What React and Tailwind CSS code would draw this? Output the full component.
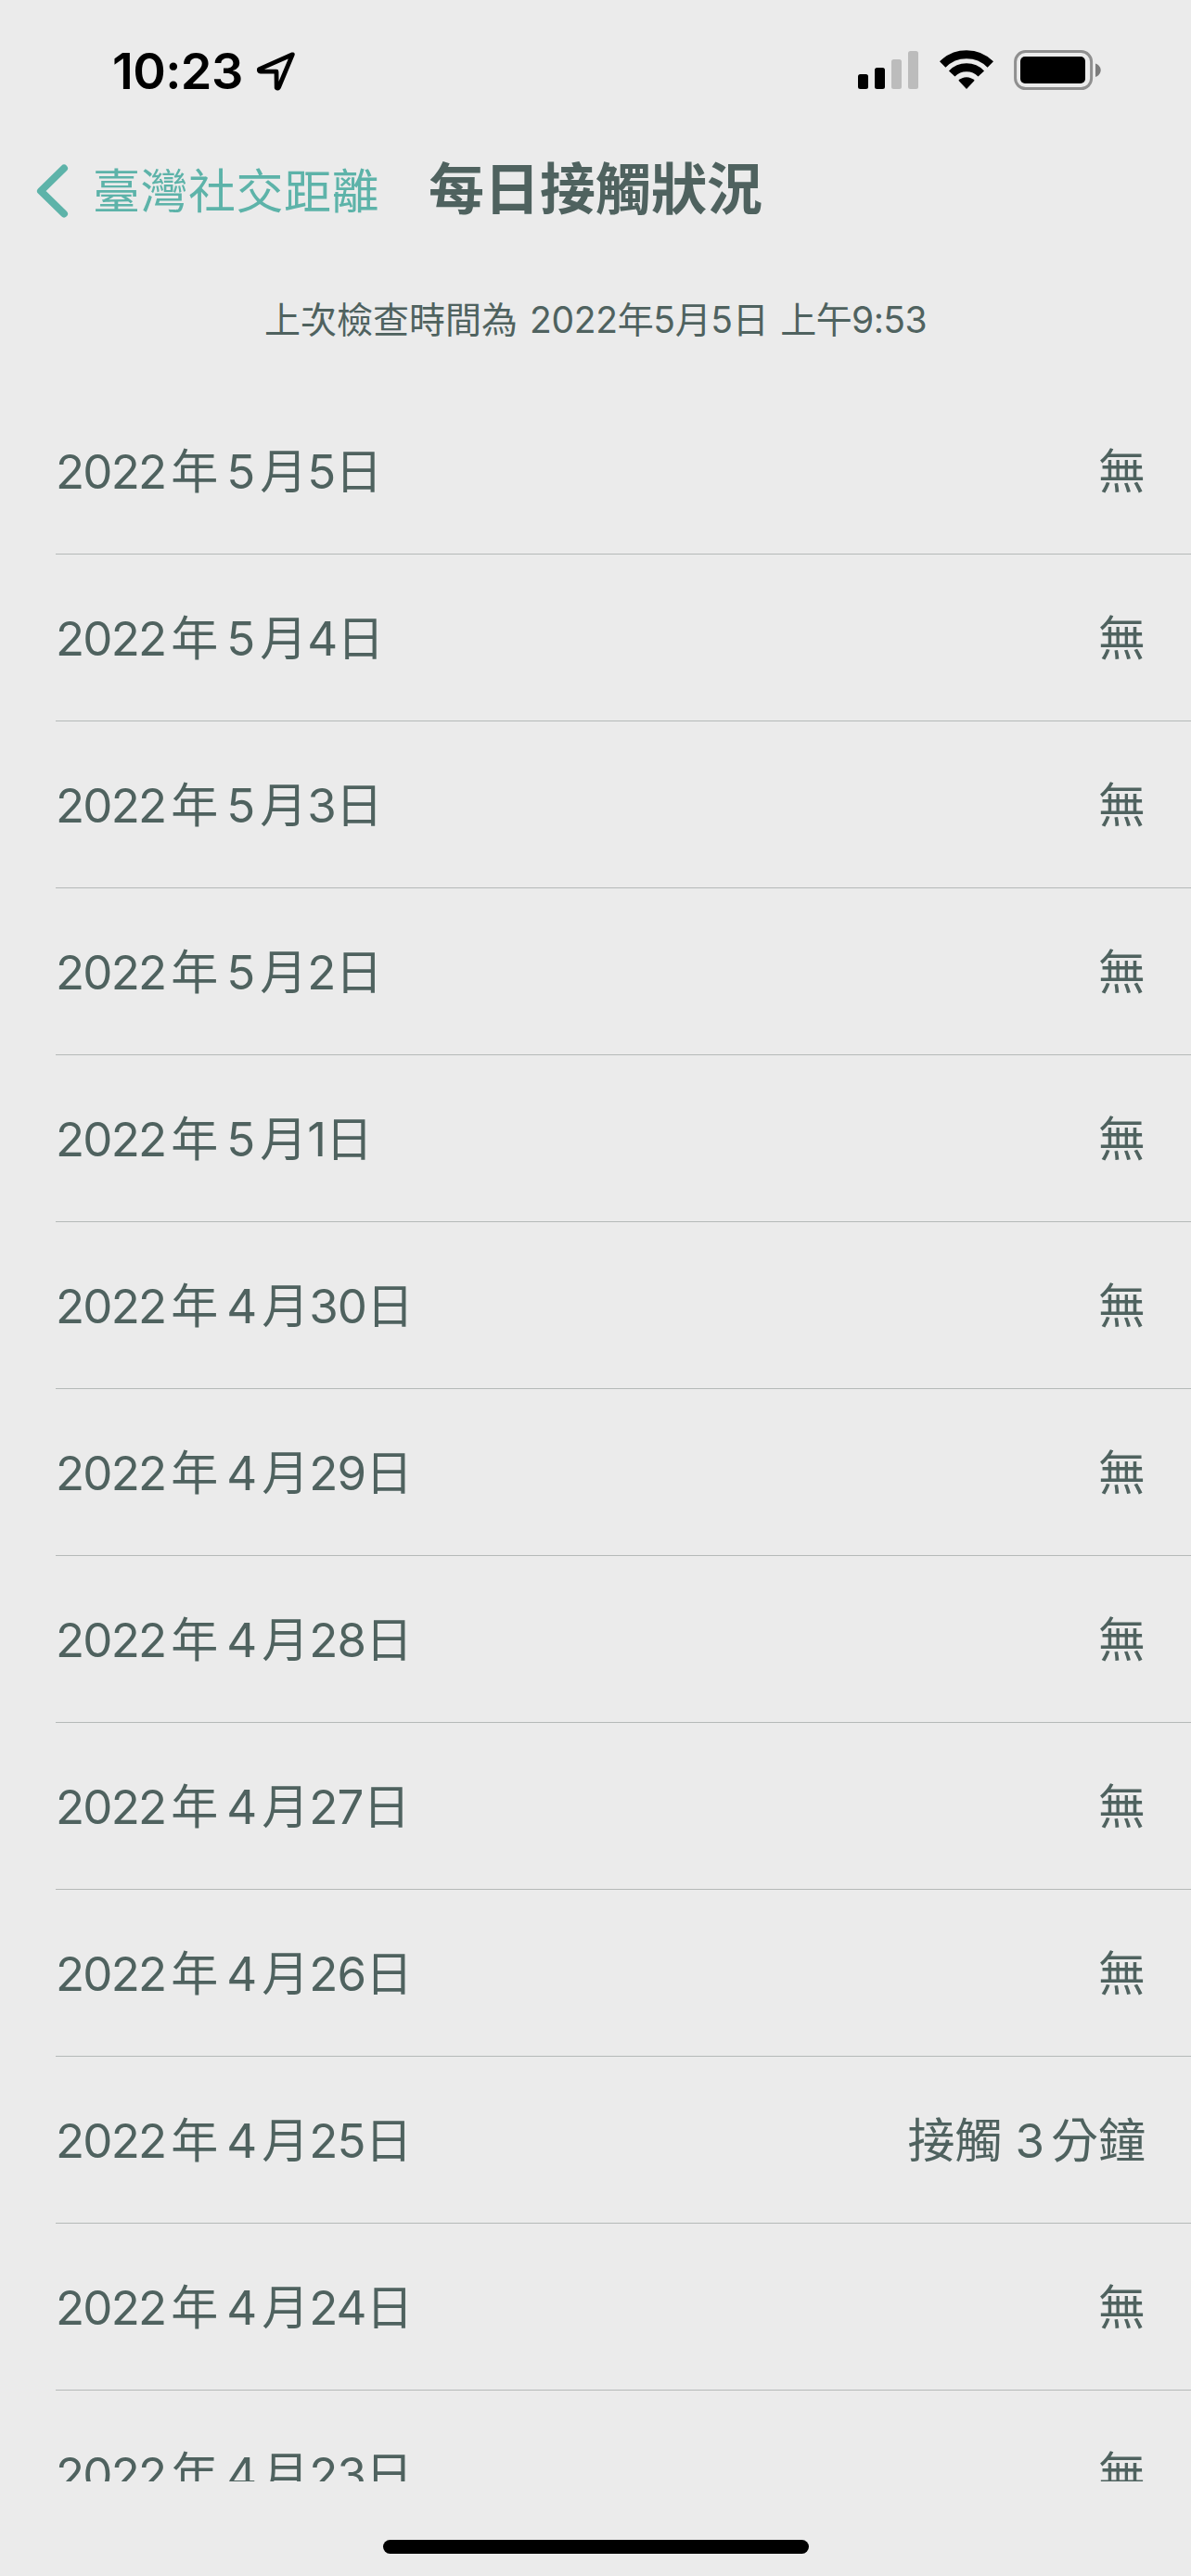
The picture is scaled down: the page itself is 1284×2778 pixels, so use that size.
import React from 'react'

const days = [
  { month: 5, day: 5 },
  { month: 5, day: 4 },
  { month: 5, day: 3 },
  { month: 5, day: 2 },
  { month: 5, day: 1 },
  { month: 4, day: 30 },
  { month: 4, day: 29 },
  { month: 4, day: 28 },
  { month: 4, day: 27 },
  { month: 4, day: 26 },
  { month: 4, day: 25, minutes: 3 },
  { month: 4, day: 24 },
  { month: 4, day: 23 },
]

const StatusBar = () => (
  <div className="flex h-[150px] shrink-0 items-start justify-between pl-[121px] pr-[96px] pt-[54px] text-black">
    <div className="flex h-[44px] items-center">
      <span className="w-[142px] whitespace-nowrap pt-[2px] text-[54px] font-semibold leading-none tracking-[-0.6px]">10:23</span>
      <svg className="ml-[13px]" width="44" height="46" viewBox="0 0 44 46" fill="none">
        <path d="M39.3 5.8 L3.4 21.6 Q3 24 5 24.2 H22 L22.2 41.6 Q23.5 43 24.6 41 Z" stroke="currentColor" strokeWidth="4.8" strokeLinejoin="round" />
      </svg>
    </div>

    <div className="flex h-[44px] items-start">
      <svg width="66" height="44" viewBox="0 0 66 44">
        <rect x="0" y="26" width="11" height="16" rx="2.5" />
        <rect x="18" y="19" width="11" height="23" rx="2.5" />
        <rect x="36" y="10" width="11" height="32" rx="2.5" fill="#bcbcbc" />
        <rect x="54" y="1" width="11" height="41" rx="2.5" fill="#bcbcbc" />
      </svg>
      <svg className="ml-[21.5px]" width="58" height="44" viewBox="0 0 58 44" fill="none">
        <path d="M3.2 15.5 A36.2 36.2 0 0 1 54.8 15.5" stroke="currentColor" strokeWidth="9" />
        <path d="M13.2 25.5 A21.9 21.9 0 0 1 44.8 25.5" stroke="currentColor" strokeWidth="9" />
        <path d="M20.3 32.7 A12.4 12.4 0 0 1 37.7 32.7 L29 42 Z" fill="currentColor" />
      </svg>
      <svg className="ml-[22.5px]" width="95" height="44" viewBox="0 0 95 44">
        <rect x="1.6" y="1.6" width="82" height="40" rx="11" fill="none" stroke="#8f8f8f" strokeWidth="3" />
        <rect x="7" y="7" width="70" height="29" rx="5" />
        <path d="M88 14.5 C91 15.5 93.7 18.5 93.7 21.7 C93.7 24.9 91 28 88 29 Z" fill="#7c7c7c" />
      </svg>
    </div>
  </div>
)

const Header = () => (
  <div className="flex h-[112px] shrink-0 items-center pl-[39px]">
    <button className="flex items-center text-[#5db3a9]">
      <svg width="35" height="58" viewBox="0 0 35 58" fill="none">
        <path d="M30 4.5 L5 29 L30 53.5" stroke="currentColor" strokeWidth="8" strokeLinecap="round" strokeLinejoin="round" />
      </svg>
      <span className="ml-[26px] text-[51px] leading-none tracking-[0.5px]">臺灣社交距離</span>
    </button>
    <h1 className="mb-[4px] ml-[53px] text-[60px] font-bold leading-none">每日接觸狀況</h1>
  </div>
)

const DayRow = ({ month, day, minutes }) => (
  <li className="ml-[60px] flex h-[180px] shrink-0 items-center justify-between border-b border-[#b5b9b8] pr-[49px] pt-[2px] text-[51px] leading-none">
    <div className="flex">
      <span className="tracking-[-1.8px]">2022</span>
      <span className="ml-[6px]">年</span>
      <span className="ml-[9px]">{month}</span>
      <span className="ml-[5px]">月</span>
      <span className="tracking-[-1px]">{day}</span>
      <span>日</span>
    </div>
    {minutes ? (
      <div className="flex">
        <span>接觸</span>
        <span className="ml-[14px] mr-[7px]">{minutes}</span>
        <span>分鐘</span>
      </div>
    ) : (
      <span>無</span>
    )}
  </li>
)

const App = () => {
  return (
    <div className="flex h-[2778px] w-[1284px] flex-col overflow-hidden bg-[#ebebeb] font-[Inter,'Noto_Sans_CJK_TC',sans-serif] text-[#4f625f]">
      <StatusBar />
      <Header />
      <p className="flex h-[156px] shrink-0 justify-center gap-[13px] pt-[63px] text-[39px] leading-[40px]">
        <span>上次檢查時間為</span>
        <span className="tracking-[-0.35px]">2022年5月5日</span>
        <span className="tracking-[-0.6px]">上午9:53</span>
      </p>
      <ul className="flex h-[2258px] shrink-0 flex-col overflow-hidden">
        {days.map((d) => (
          <DayRow key={`${d.month}-${d.day}`} {...d} />
        ))}
      </ul>
      <div className="mx-auto mt-[63px] h-[15px] w-[459px] shrink-0 rounded-full bg-black" />
    </div>
  )
}

export default App
